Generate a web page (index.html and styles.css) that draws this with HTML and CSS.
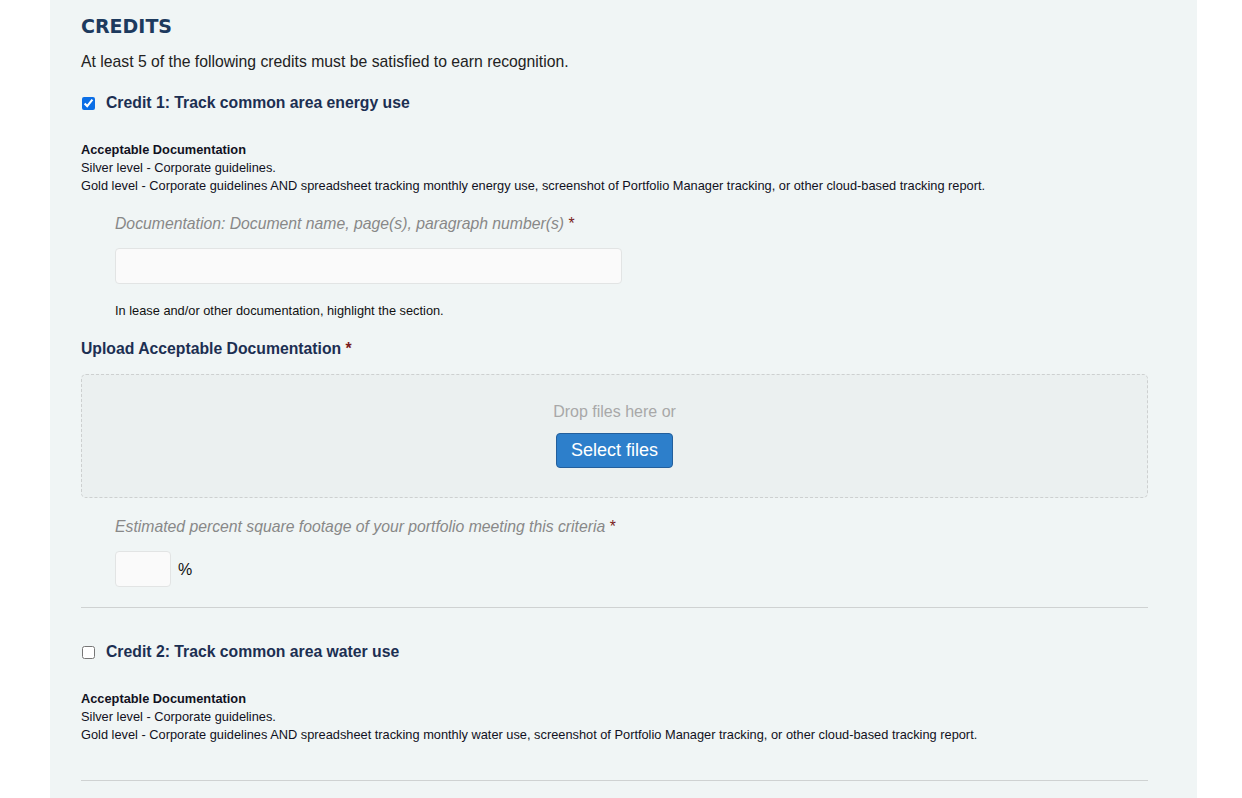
FILE: index.html
```html
<!DOCTYPE html>
<html lang="en">
<head>
<meta charset="utf-8">
<title>Credits</title>
<link rel="stylesheet" href="styles.css">
</head>
<body>
<main class="panel">
  <h2 class="title">CREDITS</h2>
  <p class="intro">At least 5 of the following credits must be satisfied to earn recognition.</p>

  <section class="credit">
    <label class="credit-head"><input type="checkbox" class="check" checked> <span>Credit 1: Track common area energy use</span></label>
    <div class="docs">
      <div class="docs-title">Acceptable Documentation</div>
      <div>Silver level - Corporate guidelines.</div>
      <div>Gold level - Corporate guidelines AND spreadsheet tracking monthly energy use, screenshot of Portfolio Manager tracking, or other cloud-based tracking report.</div>
    </div>
    <div class="field indent">
      <div class="field-label">Documentation: Document name, page(s), paragraph number(s) <span class="req">*</span></div>
      <input type="text" class="text-input wide">
      <div class="help">In lease and/or other documentation, highlight the section.</div>
    </div>
    <div class="upload-label">Upload Acceptable Documentation <span class="req">*</span></div>
    <div class="dropzone">
      <div class="drop-text">Drop files here or</div>
      <button class="btn" type="button">Select files</button>
    </div>
    <div class="field indent pct-field">
      <div class="field-label">Estimated percent square footage of your portfolio meeting this criteria <span class="req">*</span></div>
      <div class="pct-row"><input type="text" class="text-input small"><span class="pct">%</span></div>
    </div>
  </section>
  <hr class="rule">

  <section class="credit credit-2">
    <label class="credit-head"><input type="checkbox" class="check"> <span>Credit 2: Track common area water use</span></label>
    <div class="docs">
      <div class="docs-title">Acceptable Documentation</div>
      <div>Silver level - Corporate guidelines.</div>
      <div>Gold level - Corporate guidelines AND spreadsheet tracking monthly water use, screenshot of Portfolio Manager tracking, or other cloud-based tracking report.</div>
    </div>
  </section>
  <hr class="rule rule-2">
</main>
</body>
</html>
```

FILE: styles.css
```css
html, body {
  margin: 0;
  padding: 0;
  background: #ffffff;
}
body {
  font-family: "Liberation Sans", Arial, sans-serif;
  color: #222;
}
.panel {
  margin-left: 50px;
  width: 1147px;
  box-sizing: border-box;
  padding: 14px 49px 17px 31px;
  background: #f0f5f5;
  min-height: 798px;
}
.title {
  margin: 0;
  font-family: "DejaVu Sans", sans-serif;
  font-weight: 700;
  font-size: 19px;
  line-height: 24px;
  color: #1d3a5e;
}
.intro {
  margin: 14px 0 0;
  font-size: 15.75px;
  line-height: 20px;
  color: #222;
}
.credit-head {
  display: flex;
  align-items: center;
  margin-top: 21px;
  height: 20px;
  font-size: 15.75px;
  font-weight: 700;
  color: #1c2f52;
}
.credit-2 .credit-head {
  margin-top: 34px;
}
.check {
  margin: 0 11px 0 1px;
  width: 13px;
  height: 13px;
  accent-color: #0b6ee6;
}
.docs {
  margin-top: 28px;
  font-size: 12.8px;
  line-height: 18px;
  color: #111122;
}
.docs-title {
  font-weight: 700;
}
.indent {
  padding-left: 34px;
}
.field {
  margin-top: 19px;
}
.field-label {
  font-size: 15.75px;
  line-height: 20px;
  font-style: italic;
  color: #888;
}
.req {
  font-style: normal;
  color: #7a1c1c;
}
.text-input {
  display: block;
  box-sizing: border-box;
  height: 36px;
  margin-top: 14px;
  background: #fafafa;
  border: 1px solid #e2e4e4;
  border-radius: 4px;
  font-size: 16px;
  padding: 6px 10px;
}
.wide {
  width: 507px;
}
.help {
  margin-top: 18px;
  font-size: 12.8px;
  line-height: 18px;
  color: #111;
}
.upload-label {
  margin-top: 19px;
  font-size: 15.75px;
  line-height: 20px;
  font-weight: 700;
  color: #1c2f52;
}
.dropzone {
  margin-top: 15px;
  height: 124px;
  box-sizing: border-box;
  border: 1px dashed #cdd0d0;
  border-radius: 5px;
  background: #ebf0f0;
  display: flex;
  flex-direction: column;
  align-items: center;
  padding-top: 27px;
}
.drop-text {
  font-size: 16px;
  line-height: 20px;
  color: #a8a8a8;
}
.btn {
  margin-top: 11px;
  width: 117px;
  height: 35px;
  box-sizing: border-box;
  background: #2d7fcb;
  border: 1px solid #235f9c;
  border-radius: 4px;
  color: #fff;
  font-family: "Liberation Sans", Arial, sans-serif;
  font-size: 18px;
  padding: 0;
}
.pct-field {
  margin-top: 19px;
}
.pct-row {
  display: flex;
  align-items: center;
  margin-top: 14px;
}
.pct-row .text-input {
  margin-top: 0;
}
.small {
  width: 56px;
}
.pct {
  margin-left: 7px;
  font-size: 16px;
  color: #111;
  padding-top: 1px;
}
.rule {
  margin: 20px 0 0;
  border: 0;
  border-top: 1px solid #cfd2d2;
  height: 0;
}
.rule-2 {
  margin-top: 36px;
}
```
